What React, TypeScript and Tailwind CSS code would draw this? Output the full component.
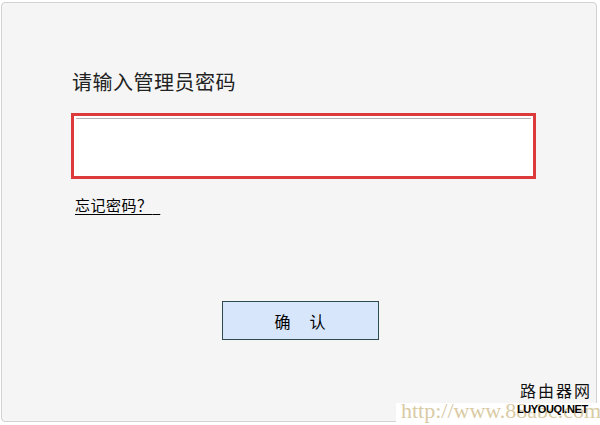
export default function App() {
  const font = "font-['Noto_Sans_CJK_SC','Noto_Sans',sans-serif]";
  return (
    <div className={`relative w-[600px] h-[425px] bg-white overflow-hidden ${font}`}>
      <div className="ml-[1px] mt-[2px] w-[596px] h-[420px] rounded-[4px] border border-[#d2d2d2] bg-[#f5f5f5] flex flex-col">
        <div className="pl-[69px] pt-[65px]">
          <h1 className="ml-[1px] text-[20px] leading-[28px] tracking-[0.5px] text-[#222] font-normal">请输入管理员密码</h1>
          <div className="mt-[17px] w-[465px] h-[66px] border-[3px] border-[#dd3a3c] bg-white p-[2px]">
            <input
              type="password"
              className="block w-full h-full border-t border-[#b4b4b4] bg-white outline-none"
            />
          </div>
          <a
            href="#"
            className="inline-block ml-[4px] mt-[16px] text-[15px] leading-[20px] tracking-[0.5px] text-black underline underline-offset-[3px] whitespace-pre"
          >
            忘记密码？{"  "}
          </a>
        </div>
        <div className="flex justify-center mt-[85px] pl-[2px]">
          <button className="w-[157px] h-[39px] border border-[#2e4c4e] bg-[#d7e6fb] flex items-center justify-center gap-[19px] text-[16px] text-black">
            <span>确</span>
            <span>认</span>
          </button>
        </div>
      </div>

      <div className="absolute left-[520px] top-[380px] text-[16px] leading-[20px] tracking-[2px] text-[#111]">
        路由器网
      </div>
      <div className="absolute left-[396px] top-[403px] w-[204px] h-[22px] bg-white" />
      <div className="absolute left-[401px] top-[398px] font-['Liberation_Serif',serif] text-[22px] leading-[26px] text-[#d9cba4] whitespace-nowrap">
        http://www.88abc.com
      </div>
      <div className="absolute left-[517px] top-[402px] font-['Liberation_Sans',sans-serif] font-bold text-[11px] leading-[14px] text-black tracking-[-0.4px]">
        LUYOUQI.NET
      </div>
    </div>
  );
}
